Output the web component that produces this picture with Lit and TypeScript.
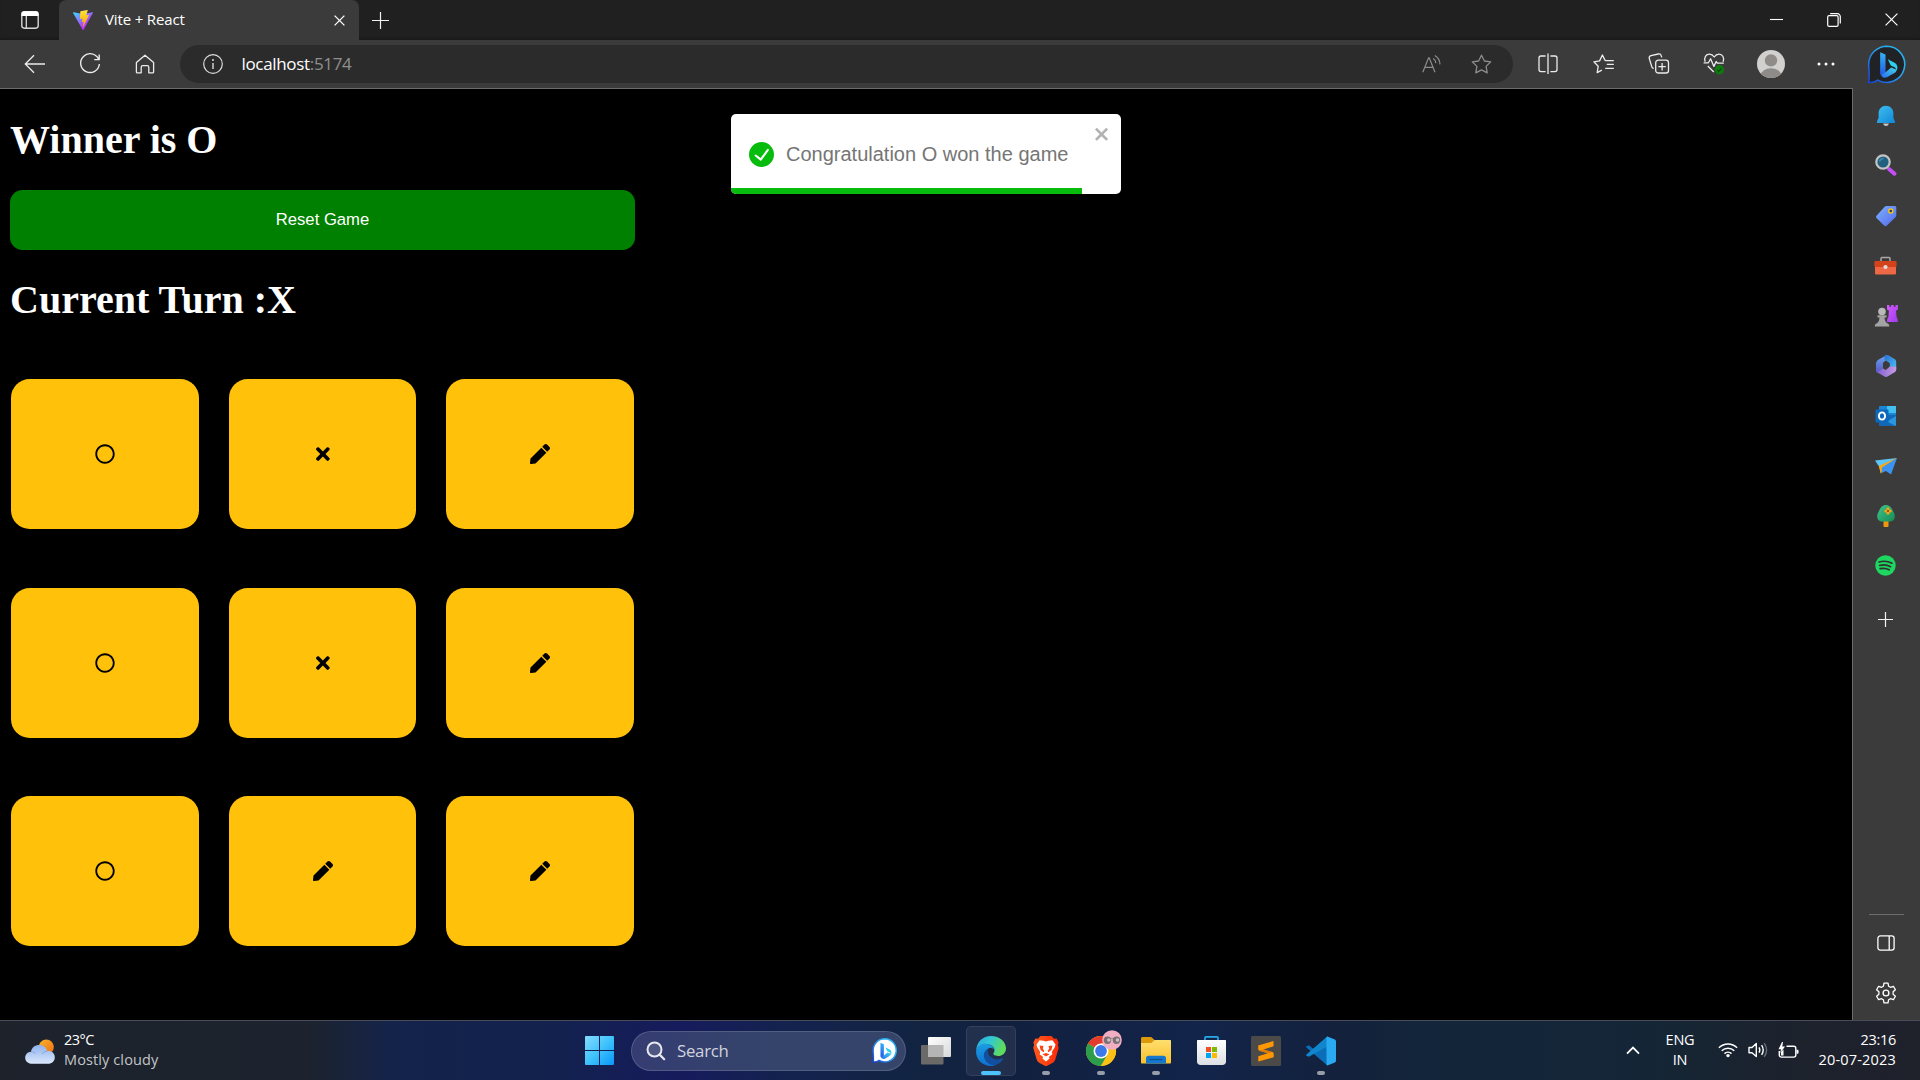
import { LitElement, html, css, svg, TemplateResult } from "lit";
import { customElement, state } from "lit/decorators.js";
import { classMap } from "lit/directives/class-map.js";

type Mark = "O" | "X" | "";

const PATHS: Record<string, { box: string; d: string }> = {
  O: {
    box: "0 0 512 512",
    d: "M256 8C119 8 8 119 8 256s111 248 248 248 248-111 248-248S393 8 256 8zm0 448c-110.5 0-200-89.5-200-200S145.5 56 256 56s200 89.5 200 200-89.5 200-200 200z",
  },
  X: {
    box: "0 0 352 512",
    d: "M242.72 256l100.07-100.07c12.28-12.28 12.28-32.19 0-44.48l-22.24-22.24c-12.28-12.28-32.19-12.28-44.48 0L176 189.28 75.93 89.21c-12.28-12.28-32.19-12.28-44.48 0L9.21 111.45c-12.28 12.28-12.28 32.19 0 44.48L109.28 256 9.21 356.07c-12.28 12.28-12.28 32.19 0 44.48l22.24 22.24c12.28 12.28 32.2 12.28 44.48 0L176 322.72l100.07 100.07c12.28 12.28 32.2 12.28 44.48 0l22.24-22.24c12.28-12.28 12.28-32.19 0-44.48L242.72 256z",
  },
  pen: {
    box: "0 0 512 512",
    d: "M290.74 93.24l128.02 128.02-277.99 277.99-114.14 12.6C11.35 513.54-1.56 500.62.14 485.34l12.7-114.22 277.9-277.88zm207.2-19.06l-60.11-60.11c-18.75-18.75-49.16-18.75-67.91 0l-56.55 56.55 128.02 128.02 56.55-56.55c18.75-18.76 18.75-49.16 0-67.91z",
  },
};

const icon = (w: number, h: number, body: TemplateResult | unknown) =>
  html`<svg width=${w} height=${h} viewBox="0 0 ${w} ${h}" fill="none">${body}</svg>`;

/* ---------- browser chrome ---------- */
const workspaces = icon(20, 20, svg`
  <rect x="1.8" y="1.8" width="16.4" height="16.4" rx="2.6" stroke="#d8d8d8" stroke-width="1.4"/>
  <path d="M1.5 6V4.2A3 3 0 0 1 4.4 1.3h11.2a3 3 0 0 1 2.9 2.9V6z" fill="#fff"/>
  <path d="M6.3 6v12" stroke="#d8d8d8" stroke-width="1.3"/>`);

const vite = html`<svg width="20" height="20" viewBox="0 0 256 257">
  <defs>
    <linearGradient id="va" x1="-.8%" x2="57.6%" y1="7.7%" y2="78.4%"><stop offset="0%" stop-color="#41D1FF"/><stop offset="100%" stop-color="#BD34FE"/></linearGradient>
    <linearGradient id="vb" x1="43.4%" x2="50.3%" y1="2.2%" y2="89%"><stop offset="0%" stop-color="#FFEA83"/><stop offset="8%" stop-color="#FFDD35"/><stop offset="100%" stop-color="#FFA800"/></linearGradient>
  </defs>
  <path fill="url(#va)" d="M255.153 37.938 134.897 252.976c-2.483 4.44-8.862 4.466-11.382.048L.875 37.958c-2.746-4.814 1.371-10.646 6.827-9.67l120.385 21.517a6.537 6.537 0 0 0 2.322-.004l117.867-21.483c5.438-.991 9.574 4.796 6.877 9.62Z"/>
  <path fill="url(#vb)" d="M185.432.063 96.44 17.501a3.268 3.268 0 0 0-2.634 3.014l-5.474 92.456a3.268 3.268 0 0 0 3.997 3.378l24.777-5.718c2.318-.535 4.413 1.507 3.936 3.838l-7.361 36.047c-.495 2.426 1.782 4.5 4.151 3.78l15.304-4.649c2.372-.72 4.652 1.36 4.15 3.788l-11.698 56.621c-.732 3.542 3.979 5.473 5.943 2.437l1.313-2.028 72.516-144.72c1.215-2.423-.88-5.186-3.54-4.672l-25.505 4.922c-2.396.462-4.435-1.77-3.759-4.114l16.646-57.705c.677-2.35-1.37-4.583-3.769-4.113Z"/>
</svg>`;

const cross = (s: number, c = "#fff", w = 1.3) =>
  icon(s, s, svg`<path d="M.6 .6 L${s - 0.6} ${s - 0.6} M${s - 0.6} .6 L.6 ${s - 0.6}" stroke=${c} stroke-width=${w}/>`);
const plus = (s: number) =>
  icon(s, s, svg`<path d="M${s / 2} 0V${s}M0 ${s / 2}H${s}" stroke="#f2f2f2" stroke-width="1.2"/>`);

const minimize = icon(13, 13, svg`<path d="M0 6.5h13" stroke="#fff" stroke-width="1.1"/>`);
const restore = icon(14, 14, svg`<rect x=".7" y="2.7" width="10.4" height="10.6" rx="1.4" stroke="#fff" stroke-width="1.2"/><path d="M3.2.7h7.2a2.9 2.9 0 0 1 2.9 2.9v7" stroke="#fff" stroke-width="1.2"/>`);
const back = icon(22, 20, svg`<path d="M21 10H1.5M10 1.3 1.3 10l8.7 8.7" stroke="#ececec" stroke-width="1.3"/>`);
const reload = icon(22, 22, svg`<path d="M19.6 6.2A9.4 9.4 0 1 0 20.4 11M20.2 1.6v5h-5" stroke="#ececec" stroke-width="1.4"/>`);
const home = icon(20, 20, svg`<path d="M1.4 8.6 10 1.2l8.6 7.4v9.3a.9.9 0 0 1-.9.9h-3.9v-5.5c0-1-.7-1.6-1.6-1.6H7.8c-.9 0-1.6.6-1.6 1.6v5.5H2.3a.9.9 0 0 1-.9-.9z" stroke="#ececec" stroke-width="1.3" stroke-linejoin="round"/>`);
const info = icon(20, 20, svg`<circle cx="10" cy="10" r="9.3" stroke="#dcdcdc" stroke-width="1.2"/><path d="M10 9v6" stroke="#dcdcdc" stroke-width="1.4"/><circle cx="10" cy="6" r="1" fill="#dcdcdc"/>`);
const readAloud = icon(20, 18, svg`<path d="M.8 17.3 6.6 2.8h.6L13 17.3M2.8 12.3h8.2" stroke="#8d8d8d" stroke-width="1.2"/><path d="M11.2 3.4c1.7 1 2.6 2.5 2.7 4.7M12.8.6c3.2 1.8 5 4.6 5.2 8.8" stroke="#8d8d8d" stroke-width="1.2"/>`);
const starPath = "M10.5 1.2l2.9 5.8 6.3.9-4.6 4.5 1.1 6.4-5.7-3-5.7 3 1.1-6.4L1.3 7.9l6.3-.9z";
const star = icon(21, 20, svg`<path d=${starPath} stroke="#8d8d8d" stroke-width="1.3" stroke-linejoin="round"/>`);
const split = icon(20, 22, svg`<path d="M7.6 3H3A2 2 0 0 0 1 5v11.6a2 2 0 0 0 2 2h4.6M12.4 3H17a2 2 0 0 1 2 2v11.6a2 2 0 0 1-2 2h-4.6M10 .5v20.6" stroke="#ececec" stroke-width="1.3"/>`);
const favorites = icon(22, 20, svg`<path d="M12.2 6.6 9.4 1 6.6 6.9l-5.7.9 4.3 4.4-1 6.4 4.6-2.4M12.2 6.6h8.6M13.8 10.4h7M12.2 14.4h8.6" stroke="#ececec" stroke-width="1.3" stroke-linejoin="round"/>`);
const collections = icon(22, 22, svg`<rect x="7.7" y="7.2" width="12.8" height="12.8" rx="2.6" stroke="#ececec" stroke-width="1.3"/><path d="M14.1 10v7.4M10.4 13.7h7.4M5.6 15.6A3 3 0 0 1 3.6 13L1.3 5.6A2.5 2.5 0 0 1 3 2.6L10.3 1a2.6 2.6 0 0 1 3 1.9l.5 1.5" stroke="#ececec" stroke-width="1.3"/>`);
const health = icon(24, 22, svg`<path d="M2.2 8.8C.6 4.4 3 1.2 6.5 1.2c2.300 0 3.700 1.300 4.700 2.800 1-1.500 2.500-2.800 4.800-2.800 3.500 0 5.700 3.500 4.100 7.600M.6 9.800h4.800l2.200-4 3.300 7.600 2.300-4.900 1.100 1.600h6.500M4.800 13l6 6" stroke="#ececec" stroke-width="1.3" stroke-linejoin="round"/><circle cx="16.400" cy="16.800" r="4.700" fill="#0f7b0f"/><path d="m14.300 17 1.500 1.400 2.800-3" stroke="#0a4d0a" stroke-width="1.200"/>`);
const avatar = html`<svg width="28" height="28" viewBox="0 0 28 28"><defs><clipPath id="av"><circle cx="14" cy="14" r="14"/></clipPath></defs><g clip-path="url(#av)"><rect width="28" height="28" fill="#d2d0ce"/><circle cx="14" cy="10.400" r="6.200" fill="#8f8b88"/><ellipse cx="14" cy="26" rx="10.500" ry="7.800" fill="#8f8b88"/></g></svg>`;
const dots = icon(18, 4, svg`<circle cx="2" cy="2" r="1.500" fill="#fff"/><circle cx="9" cy="2" r="1.500" fill="#fff"/><circle cx="16" cy="2" r="1.500" fill="#fff"/>`);

const bing = (size: number, light: boolean) => html`<svg width=${size} height=${size} viewBox="0 0 40 40">
  <defs>
    <linearGradient id="bo" x1="1" y1="0" x2="0" y2="1"><stop offset="0" stop-color=${light ? "#27c4f2" : "#22b5ef"}/><stop offset=".4" stop-color="#2aa8f0"/><stop offset="1" stop-color="#1742d4"/></linearGradient>
    <linearGradient id="bs" x1="0" y1="0" x2="0" y2="1"><stop offset="0" stop-color="#35b4f5"/><stop offset="1" stop-color="#2357e8"/></linearGradient>
    <linearGradient id="bt" x1="0" y1="1" x2="1" y2="0"><stop offset="0" stop-color="#2a6bf0"/><stop offset="1" stop-color="#3fd8e8"/></linearGradient>
  </defs>
  <path d="M20.500 1.200A18.600 18.600 0 1 1 11 36C8.400 38 5 38.800 1.600 38.400 3 34.500 1.900 28 1.700 20A18.800 18.800 0 0 1 20.500 1.200z" fill=${light ? "#fff" : "#202226"} stroke="url(#bo)" stroke-width=${light ? 2.4 : 1.6}/>
  <path d="M13.500 7.500 19 9.800v18.500l-2.600 3.200c-2 .5-2.900-1-2.900-3z" fill="url(#bs)"/>
  <path d="m21.300 14.600 7 3.600c3 1.800 3.600 4.800 2.200 8l-1.700-3.100-4.400-2.100z" fill="#2fd0ec"/>
  <path d="M14.600 30.900 19 28l5.800-4.900 5.700 2.200c-.6 2.200-1.600 3-3.700 4.300l-6.400 3.600c-2.600 1-4.700.2-5.800-2.300z" fill="url(#bt)"/>
</svg>`;

/* ---------- sidebar ---------- */
const side: TemplateResult[] = [
  html`<svg width="22" height="22" viewBox="0 0 22 22"><defs><linearGradient id="s1" x1="0" y1="0" x2="1" y2="1"><stop stop-color="#3fc0f0"/><stop offset="1" stop-color="#0f87d8"/></linearGradient></defs><path d="M8.200 18.500h5.600c-.4 1.800-1.500 2.500-2.800 2.500s-2.400-.7-2.800-2.500z" fill="#c8c8c8"/><path d="M11 .8c4.300 0 7.400 3.200 7.400 7.400v4.600l1.600 3.600c.4.900 0 1.600-1 1.600H3c-1 0-1.400-.7-1-1.600l1.600-3.600V8.200C3.600 4 6.700.8 11 .8z" fill="url(#s1)"/></svg>`,
  html`<svg width="22" height="26" viewBox="0 0 22 26"><path d="m14 16 5.500 4.700" stroke="#c44df5" stroke-width="4" stroke-linecap="round"/><circle cx="8" cy="9" r="6.700" fill="#23607f" stroke="#c4c4c4" stroke-width="2.200"/><path d="M4.500 8.500a4 4 0 0 1 4-3" stroke="#3d8cab" stroke-width="1.600" fill="none"/></svg>`,
  html`<svg width="22" height="22" viewBox="0 0 22 22"><defs><linearGradient id="s3" x1="0" y1="0" x2="1" y2="1"><stop stop-color="#7cb2ff"/><stop offset="1" stop-color="#5468e8"/></linearGradient></defs><path d="M11.500 1h8.200c.9 0 1.600.7 1.600 1.600v7.600c0 .8-.3 1.400-.8 2L11.900 20.600c-.8.8-2 .8-2.800 0l-7.400-7.400c-.8-.8-.8-2 0-2.800L9.700 1.800c.5-.5 1.100-.8 1.800-.8z" fill="url(#s3)"/><circle cx="15.800" cy="6" r="2" fill="#26375c" stroke="#f4c315" stroke-width="1.500"/></svg>`,
  html`<svg width="23" height="20" viewBox="0 0 23 20"><path d="M7 5V2.600C7 2 7.500 1.600 8 1.600h7c.6 0 1 .4 1 1V5" fill="none" stroke="#a9a9a9" stroke-width="1.500"/><rect x="1" y="9" width="21" height="9.500" rx="1.200" fill="#ee6846"/><rect x=".4" y="5" width="22.200" height="6" rx="1" fill="#d2431c"/><circle cx="11.500" cy="11" r="2.100" fill="#dedede"/></svg>`,
  html`<svg width="24" height="24" viewBox="0 0 24 24"><defs><linearGradient id="s5" x1="0" y1="0" x2="1" y2="1"><stop stop-color="#d45cff"/><stop offset="1" stop-color="#9d3be8"/></linearGradient></defs><path d="M13 1h2.300v1.800h1.800V1h2.600v1.800h1.800V1H24v4.500l-2 1.300.6 6.200 1.200 2.400V18H13l.2-2.400 1.200-2.600.5-6.200-1.900-1.300z" fill="url(#s5)"/><circle cx="8" cy="7.500" r="3.800" fill="#b8b8b8"/><path d="M3.500 11.200h9v2.200h-2c.2 2.500.7 4 2.600 5.800 1.700.6 2.200 1.500 2.200 3.300H.8c0-1.800.5-2.700 2.200-3.300 1.900-1.800 2.300-3.300 2.500-5.800h-2z" fill="#a3a3a3"/></svg>`,
  html`<svg width="22" height="24" viewBox="0 0 22 24"><defs><linearGradient id="s6" x1="0" y1="0" x2="0" y2="1"><stop stop-color="#6aa9f0"/><stop offset="1" stop-color="#5a55c4"/></linearGradient><linearGradient id="s7" x1="0" y1="0" x2="1" y2="0"><stop stop-color="#7f62cc"/><stop offset="1" stop-color="#c79be6"/></linearGradient><linearGradient id="s8" x1="0" y1="0" x2="1" y2="1"><stop stop-color="#2a6fd0"/><stop offset="1" stop-color="#4fc0f4"/></linearGradient></defs><path d="M12 1 3.700 5.500C2 6.500 1 8 1 10v7c0 1.300 1.400 2 2.500 1.400L8 15.700V9.800c0-1.200.5-1.800 1.400-2.400l5-3.300z" fill="url(#s6)"/><path d="M9.500 1.500c1.500-.8 3-.7 4.400.1L19.500 5c1.200.8 1.700 1.700 1.700 3v8l-6.400-3.400V9.200L9.300 5.500z" fill="url(#s8)"/><path d="M2 18.300 9 22.300c1.300.8 2.700.8 4 0l6.200-3.700c1.300-.8 2-1.800 2-3.300v-2.500l-6.400-.2-4 3.400L8 14.500z" fill="url(#s7)"/></svg>`,
  html`<svg width="22" height="22" viewBox="0 0 22 22"><rect x="4" y="1" width="17" height="14" rx="1" fill="#1a86d4"/><path d="M12 1h9v7h-9z" fill="#42c0f2"/><path d="M4 10h17v10c0 .6-.4 1-1 1H5c-.6 0-1-.4-1-1z" fill="#1467b4"/><path d="m21 11-9 5.500L20.500 21c.3-.2.500-.6.500-1z" fill="#2896e0"/><rect x=".5" y="4.500" width="13" height="13" rx="1" fill="#0b68bd"/><ellipse cx="7" cy="11" rx="3.100" ry="3.600" fill="none" stroke="#fff" stroke-width="1.900"/></svg>`,
  html`<svg width="22" height="18" viewBox="0 0 22 18"><path d="M0 3.500 22 1 4 9.500z" fill="#5cc6f8"/><path d="M4 9 22 1 8 11l-2 6z" fill="#f5b21b"/><path d="M4 9 22 1 5.500 16z" fill="#f5a81b"/><path d="m7 10.500 15-9.500-6 16.500-5-3.600-4.500 2z" fill="#3c92ee"/></svg>`,
  html`<svg width="20" height="24" viewBox="0 0 20 24"><defs><linearGradient id="s9" x1="0" y1="0" x2="1" y2="1"><stop stop-color="#3fc58c"/><stop offset="1" stop-color="#168a55"/></linearGradient></defs><path d="M7.500 16h5v6c0 .6-.4 1-1 1h-3c-.6 0-1-.4-1-1z" fill="#f0960f"/><path d="M10 1c3.500 0 5.500 2.500 6.500 5 1.500 2.500 2.300 4.500 2.300 6.600 0 3-2.200 5-5.300 5h-7c-3.100 0-5.300-2-5.300-5 0-2.100.8-4.100 2.300-6.600C4.500 3.500 6.500 1 10 1z" fill="url(#s9)"/><g fill="#f5a50f"><circle cx="12" cy="4.900" r="1.600"/><circle cx="12" cy="9.100" r="1.600"/><circle cx="9.900" cy="7" r="1.600"/><circle cx="14.100" cy="7" r="1.600"/></g><circle cx="12" cy="7" r="1.100" fill="#a33d08"/></svg>`,
  html`<svg width="21" height="21" viewBox="0 0 21 21"><circle cx="10.500" cy="10.500" r="10.200" fill="#1ed760"/><path d="M4 7c4.500-1.300 9-.9 13 1.200M4.600 10.500c4-1.100 7.500-.7 11 1.200M5.200 13.700c3.300-.8 6.200-.5 9 1.100" stroke="#303030" stroke-width="1.700" stroke-linecap="round" fill="none"/></svg>`,
];
const panelIcon = icon(18, 16, svg`<rect x=".9" y=".9" width="16.200" height="14.200" rx="2.400" stroke="#fff" stroke-width="1.300"/><path d="M12.200 1v14" stroke="#fff" stroke-width="1.300"/>`);
const gear = icon(22, 22, svg`<path d="M9 1.200h4l.6 3 1.900 1.100 2.900-1 2 3.500-2.300 2v2.400l2.300 2-2 3.500-2.900-1-1.900 1.100-.6 3H9l-.6-3-1.900-1.100-2.900 1-2-3.500 2.300-2V9.800l-2.300-2 2-3.500 2.900 1 1.900-1.100z" stroke="#fff" stroke-width="1.300" stroke-linejoin="round"/><circle cx="11" cy="11" r="2.900" stroke="#fff" stroke-width="1.400"/>`);

/* ---------- taskbar ---------- */
const weather = html`<svg width="30" height="26" viewBox="0 0 30 26"><defs><linearGradient id="w1" x1="0" y1="0" x2="1" y2="1"><stop stop-color="#f8b62d"/><stop offset="1" stop-color="#ef6a12"/></linearGradient><linearGradient id="w2" x1="0" y1="0" x2="0" y2="1"><stop stop-color="#8fb2ee"/><stop offset="1" stop-color="#dbe8fb"/></linearGradient></defs><circle cx="21.300" cy="8" r="7.600" fill="url(#w1)"/><path d="M6 12.800C6.600 8.500 10 6 14 6c4.300 0 7.400 2.600 8.200 6.200 4.500-.6 7.600 2.300 7.600 6 0 3.900-2.800 6.600-6.800 6.600H7c-4 0-6.800-2.400-6.800-6 0-3.400 2.500-5.900 5.800-6z" fill="url(#w2)"/><path d="M17 15c1.300-1.800 3-2.800 5.200-2.800M6 12.800c2 0 3.600.6 4.600 1.800" stroke="#83a4e4" stroke-width="1" fill="none"/></svg>`;
const winLogo = html`<svg width="29" height="29" viewBox="0 0 29 29"><defs><linearGradient id="wl" x1="0" y1="0" x2="29" y2="29" gradientUnits="userSpaceOnUse"><stop stop-color="#86dcff"/><stop offset=".5" stop-color="#3fc3fb"/><stop offset="1" stop-color="#0a95fa"/></linearGradient></defs><path fill="url(#wl)" d="M1 0h13v14H0V1a1 1 0 0 1 1-1zM15 0h13a1 1 0 0 1 1 1v13H15zM0 15h14v14H1a1 1 0 0 1-1-1zM15 15h14v13a1 1 0 0 1-1 1H15z"/></svg>`;
const magnifier = icon(20, 20, svg`<circle cx="8.500" cy="8.500" r="7" fill="#ffffff22" stroke="#e6e8ee" stroke-width="2"/><path d="m13.600 13.600 4.600 4.600" stroke="#e6e8ee" stroke-width="2.200" stroke-linecap="round"/>`);
const taskView = html`<svg width="30" height="28" viewBox="0 0 30 28"><defs><linearGradient id="tv" x1="0" y1="0" x2="1" y2="1"><stop stop-color="#fff"/><stop offset="1" stop-color="#d8d8d8"/></linearGradient></defs><rect x="0" y="8" width="22.500" height="19.600" rx="1" fill="#6c6a69"/><rect x="7" y="0" width="23" height="20" rx="1" fill="url(#tv)"/><path d="M7 8h15.500v12H8a1 1 0 0 1-1-1z" fill="#b5b5b5"/></svg>`;
const edge = html`<svg width="30" height="30" viewBox="0 0 30 30"><defs><linearGradient id="e1" x1="0" y1="0" x2="1" y2=".3"><stop stop-color="#2aa6e0"/><stop offset=".5" stop-color="#31c8d4"/><stop offset="1" stop-color="#5fdc5a"/></linearGradient><linearGradient id="e2" x1="0" y1="0" x2="0" y2="1"><stop stop-color="#1b9de2"/><stop offset="1" stop-color="#0f6fd0"/></linearGradient></defs><path d="M.2 14C.8 5.500 7.200 0 15 0c8.800 0 15 6 15 12.200 0 4.700-3.500 7.800-8 7.800-3.400 0-5.300-1.300-4.400-2.900 1.100-1.800 1.200-3.600.2-5.300C16 8.600 12 7.400 8 8.200 4.500 9 1.500 11 .2 14z" fill="url(#e1)"/><path d="M.1 14.500C1.500 9.800 5.500 7.400 10 7.700c4.500.3 7.600 2.800 8 6-1.300-2-4-2.600-6-1-3.500 3-2.500 9.300 1.500 13 1.900 1.700 3.500 2.700 5.300 3.800C9.500 32-.8 25 .1 14.500z" fill="url(#e2)"/><path d="M12 12.700c-2.900 1.300-4.500 4.200-4.200 7.300.4 4.500 4.500 9.300 11 9.500 3.600-1.200 6.400-3.300 8.300-6.400.4-.8-.2-1.200-1-.8C21 25 13 22.500 12 16.500c-.2-1.500 0-2.700 0-3.800z" fill="#12509f"/></svg>`;
const brave = html`<svg width="26" height="30" viewBox="0 0 26 30"><defs><linearGradient id="br"><stop stop-color="#ff5a1c"/><stop offset="1" stop-color="#fb2a08"/></linearGradient></defs><path d="M7.500 0h11L21 2.700l2.600-.3 2 4-.7 2.300.8 3.300-3.500 11.800c-.4 1.200-1 1.900-2 2.600L13.800 30h-1.600l-6.400-3.600c-1-.7-1.600-1.400-2-2.600L.3 12l.8-3.300-.7-2.300 2-4 2.600.3z" fill="url(#br)"/><path d="m13 5.500 2.500-.8 4-.5 3 4.300-.7 2.800-3 4.700.6 2.300-3.600 2.700.8 1.600L13 25.500l-3.600-2.900.8-1.600-3.600-2.700.6-2.300-3-4.700-.7-2.800 3-4.300 4 .5z" fill="#fff"/><path d="m6.500 9.600 4 .4-.7 2.600 1.500 2.500-.8 1.100-2.900-2.300zM19.500 9.600l-4 .4.7 2.600-1.500 2.500.8 1.100 2.900-2.300zM9.500 18.300l3.500-1.300 3.500 1.300L13 20.600z" fill="#fb4314"/></svg>`;
const chrome = html`<svg width="36" height="36" viewBox="0 0 36 36"><g transform="translate(0 6)"><circle cx="15" cy="15" r="15" fill="#fbc116"/><path d="M15 15 2 7.500A15 15 0 0 0 15 30l6.500-11.200z" fill="#2c9e4b"/><path d="M15 15 2 7.500A15 15 0 0 1 28 7.500H15z" fill="#e33b2e"/><path d="M28 7.500H15V15l6.500 3.700L15 30A15 15 0 0 0 28 7.500z" fill="#fbc116"/><circle cx="15" cy="15" r="7.500" fill="#fff"/><circle cx="15" cy="15" r="5.900" fill="#3b79ea"/></g><circle cx="26" cy="10" r="9.800" fill="#f0aec3"/><path d="M18 8.500h16" stroke="#a08a90" stroke-width="1.200"/><circle cx="21.500" cy="10.300" r="3.700" fill="#7b6f73"/><circle cx="30.500" cy="10.300" r="3.700" fill="#7b6f73"/><circle cx="22.800" cy="10" r="1.800" fill="#c9c1c4"/><circle cx="31.500" cy="10" r="1.800" fill="#c9c1c4"/></svg>`;
const explorer = html`<svg width="30" height="27" viewBox="0 0 30 27"><defs><linearGradient id="fx" x1="0" y1="0" x2="0" y2="1"><stop stop-color="#ffdf6e"/><stop offset="1" stop-color="#fbc02b"/></linearGradient></defs><path d="M0 1.500C0 .7.700 0 1.500 0h8c.8 0 1.400.3 1.900.9L13.500 3 11 7H0z" fill="#dc9a0b"/><path d="M0 6h9.500c1 0 1.500-.3 2-1l1-1.200c.4-.6.900-.8 1.600-.8H29c.6 0 1 .4 1 1v21.500c0 .6-.4 1-1 1H1c-.6 0-1-.4-1-1z" fill="url(#fx)"/><path d="M5 26.500V21c0-1.300 1-2.300 2.300-2.300h15.400c1.300 0 2.300 1 2.300 2.300v5.500z" fill="#1578cc"/><path d="M8.500 22.500h13" stroke="#0c4f92" stroke-width="1.300"/></svg>`;
const store = html`<svg width="29" height="29" viewBox="0 0 29 29"><defs><linearGradient id="st" x1="0" y1="0" x2="0" y2="1"><stop stop-color="#fff"/><stop offset="1" stop-color="#dcdfe3"/></linearGradient></defs><path d="M8 6V1.600C8 1 8.400.8 9 .8h11c.6 0 1 .2 1 .8V6" fill="none" stroke="#27a9ea" stroke-width="1.700"/><path d="M0 5c0-.6.400-1 1-1h27c.6 0 1 .4 1 1v20.500c0 2-1.500 3.500-3.500 3.500h-22C1.500 29 0 27.500 0 25.500z" fill="url(#st)"/><path d="M9 11h5v5H9z" fill="#f25022"/><path d="M15 11h5v5h-5z" fill="#7fba00"/><path d="M9 17h5v5H9z" fill="#00a4ef"/><path d="M15 17h5v5h-5z" fill="#ffb900"/></svg>`;
const sublime = html`<svg width="30" height="30" viewBox="0 0 30 30"><rect width="30" height="30" rx="1.500" fill="#4b4a49"/><path d="M22.500 5v5.300L12.500 13.400l8.700 2.700c1 .3 1.500 1 1.500 2V21.300L7.300 25.500V20.300l9.500-3L8.400 14.700c-.8-.3-1.200-.8-1.200-1.600V9.500z" fill="#ff9800"/><path d="m12.500 13.400 8.700 2.700-4.400 1.200-8.400-2.600z" fill="#d97b05"/></svg>`;
const vscode = html`<svg width="30" height="30" viewBox="0 0 30 30"><path d="M21.300.4 7.500 13 2.800 9.300.5 10.300c-.5.3-.5.900-.1 1.300L21.300 29.600 24 21z" fill="#0a6fb8"/><path d="M.4 18.400 21.300.4 24 9 2.800 20.700.5 19.700c-.5-.3-.5-.9-.1-1.300z" fill="#1186cc"/><path d="m21.300.4 7.600 3.200c.7.300 1.100.9 1.100 1.600v19.600c0 .7-.4 1.300-1.100 1.600l-7.600 3.200c-.5-.4-.8-1-.8-1.700V2.100c0-.7.300-1.300.8-1.700z" fill="#2aaaf2"/></svg>`;
const chevron = icon(14, 9, svg`<path d="m1 7.600 6-6 6 6" stroke="#fff" stroke-width="1.800"/>`);
const wifi = icon(20, 16, svg`<path d="M.9 5.800a13 13 0 0 1 18.200 0M3.700 8.800a9 9 0 0 1 12.600 0M6.500 11.600a5 5 0 0 1 7 0" stroke="#fff" stroke-width="1.500"/><circle cx="10" cy="13.600" r="1.700" fill="#fff"/>`);
const speaker = icon(20, 16, svg`<path d="M1 5.500h3L8.300 1.500v13L4 10.700H1z" stroke="#fff" stroke-width="1.400" stroke-linejoin="round"/><path d="M11 5.400c1 1.600 1 3.700 0 5.300M13.600 3.200c2 3 2 6.700 0 9.700" stroke="#fff" stroke-width="1.400"/><path d="M16.200 1.200c3 4.200 3 9.400 0 13.700" stroke="#65707b" stroke-width="1.400"/>`);
const battery = icon(21, 17, svg`<path d="M8.500 4.300h7.300a2 2 0 0 1 2 2v6.800a2 2 0 0 1-2 2H3.300a2 2 0 0 1-2-2V9" stroke="#fff" stroke-width="1.400"/><path d="M18.500 7.700h1c.6 0 1 .4 1 1v2c0 .6-.4 1-1 1h-1z" fill="#fff"/><path d="M4 0 .5 7.300H3L2.300 11 7 4.500H4.300L5 0z" fill="#fff"/><path d="M3 13.500V10l2.500-2.500v6z" fill="#fff"/>`);

@customElement("app-root")
export class AppRoot extends LitElement {
  static styles = css`
    :host { display: block; width: 1920px; height: 1080px; overflow: hidden; background: #000; color: #fff; }
    * { box-sizing: border-box; }
    svg { display: block; flex: none; overflow: visible; }
    .desktop { display: grid; grid-template-rows: 40px 48px 932px 60px; height: 1080px; font-family: "Open Sans", "Noto Sans", sans-serif; }
    .center { display: flex; align-items: center; justify-content: center; }

    .tabs { background: #202020; display: flex; align-items: stretch; box-shadow: inset 0 -3px 3px -2px #181818; }
    .tabs .work { width: 59px; }
    .tab { width: 300px; background: #3b3b3b; border-radius: 7px 7px 0 0; display: flex; align-items: center; padding: 0 14px; }
    .tab .name { flex: 1; margin-left: 12px; font-size: 15px; letter-spacing: -0.150px; line-height: 20px; padding-bottom: 3px; }
    .newtab { width: 43px; }
    .drag { flex: 1; }
    .wc { width: 57.500px; }
    .wcs { display: flex; padding-bottom: 1px; }

    .bar { background: #3b3b3b; display: flex; align-items: center; }
    .bar .nav { width: 55px; height: 48px; }
    .first { margin-left: 7px; }
    .pill { width: 1333px; height: 38px; border-radius: 19px; background: #2b2b2b; display: flex; align-items: center; margin-left: 8px; padding: 0 21px 0 22.500px; }
    .url { flex: 1; margin-left: 19px; font-size: 17px; letter-spacing: -0.330px; line-height: 24px; padding-bottom: 1px; }
    .port { color: #8f8f8f; }
    .pill .aloud { margin-right: 29px; }
    .tools { display: flex; align-items: center; margin-left: 7px; }
    .tools .t { width: 55.700px; height: 48px; }
    .bingtop { margin-left: 11px; width: 42px; }

    .main { display: grid; grid-template-columns: 1852px 68px; }
    .page { border-top: 1px solid #6c6c6c; background: #000; padding: 28px 10px 0; position: relative; }
    h1 { margin: 0; font: bold 40px/46px "Liberation Serif", "Times New Roman", serif; }
    .reset { display: block; width: 625px; height: 60px; margin: 27px 0 27px; border: 0; border-radius: 12.500px; background: #008000; color: #fff; font: 16.670px "Liberation Sans", Arial, sans-serif; padding: 0; }
    .board { display: grid; grid-template-columns: repeat(3, 187.500px); grid-auto-rows: 150px; gap: 58.700px 30.100px; margin: 56px 0 0 1.250px; }
    .cell { background: #ffc10a; border-radius: 18.750px; }
    .cell svg { height: 20px; fill: #000; }
    .toast { position: absolute; left: 731px; top: 25px; width: 390px; height: 80px; border-radius: 5px; overflow: hidden; background: #fff; color: #757575; display: flex; align-items: center; padding: 0 12px 0 18px; font: 20px "Liberation Sans", Arial, sans-serif; }
    .toast .msg { flex: 1; margin-left: 12px; white-space: nowrap; }
    .toast .x { align-self: flex-start; margin-top: 10px; }
    .progress { position: absolute; left: 0; bottom: 0; height: 6px; background: #07bc0c; }

    .side { background: #3b3b3b; border-left: 1px solid #6c6c6c; display: flex; flex-direction: column; align-items: center; padding: 2.500px 1.500px 0 0; }
    .side .s { height: 50px; width: 66px; flex: none; }
    .side .add { margin-top: 3.500px; }
    .side .fill { flex: 1; }
    .side hr { width: 35px; height: 1px; border: 0; background: #6c6c6c; margin: 0 0 3px 1px; }
    .side .last { margin-bottom: 2px; }

    .task { border-top: 1px solid #484d59; display: grid; grid-template-columns: 572px 1fr auto; font-size: 14.500px; line-height: 20px; background: linear-gradient(90deg, #1d222b 0, #1c232e 310px, #14234a 390px, #13214e 560px, #161b5c 680px, #14224f 780px, #122443 900px, #12203f 1010px, #12244a 1200px, #13213c 1340px, #13253a 1420px, #142636 1650px, #1c222d 1780px, #1f212b 1920px); }
    .weather { display: flex; align-items: center; padding-left: 25px; gap: 9px; }
    .weather .sub { color: #c3c6ca; letter-spacing: 0.110px; }
    .temp { letter-spacing: -0.500px; }
    .weather svg { margin-top: 3px; }
    .weather .txt { margin-top: -2px; }
    .apps { display: flex; align-items: center; }
    .start { width: 55px; }
    .search { width: 275px; height: 40px; border-radius: 20px; border: 1px solid #ffffff26; background: linear-gradient(90deg, #353c72, #34446a 50%, #36446a); display: flex; align-items: center; padding: 0 8px 0 14px; margin: 0 4px; color: #d0d3de; }
    .search .q { flex: 1; margin-left: 11px; font-size: 16.800px; letter-spacing: -0.250px; line-height: 24px; }
    .tview { width: 52px; }
    .app { width: 50px; height: 50px; border-radius: 5px; margin-left: 5px; position: relative; border: 1px solid transparent; }
    .app.active { background: #ffffff12; border-color: #ffffff14; }
    .app.first-app { margin-left: 4px; }
    .app .badge-shift { padding: 0 0 6px 6px; }
    .app i { position: absolute; left: 20px; bottom: 0; width: 8px; height: 4px; border-radius: 2px; background: #979eaa; }
    .app.active i { left: 14px; width: 20px; background: #4cc2ff; }
    .tray { display: flex; align-items: center; padding-right: 24px; }
    .tray .lang { text-align: center; margin: -2px 22px 0 24px; width: 32px; letter-spacing: -0.200px; }
    .tray .status { display: flex; align-items: center; gap: 10px; margin-top: -1px; }
    .tray .clock { text-align: right; margin: -2px 0 0 17px; width: 80px; letter-spacing: -0.300px; white-space: nowrap; }
    .tray .date { letter-spacing: 0.180px; }
  `;

  @state() private cells: Mark[] = ["O", "X", "", "O", "X", "", "O", "", ""];
  @state() private turn: Mark = "X";
  @state() private winner: Mark = "O";
  private progress = 90;

  private renderCell(mark: Mark) {
    const shape = PATHS[mark || "pen"];
    return html`<div class="cell center"><svg viewBox=${shape.box}><path d=${shape.d} /></svg></div>`;
  }

  private renderApp(art: TemplateResult, running: boolean, active = false, badge = false) {
    return html`<div class=${classMap({ app: true, center: true, active, "first-app": active })}>
      <div class=${classMap({ "badge-shift": badge })}>${art}</div>${running ? html`<i></i>` : ""}
    </div>`;
  }

  render() {
    return html`<div class="desktop">
      <header class="tabs">
        <div class="work center">${workspaces}</div>
        <div class="tab">${vite}<span class="name">Vite + React</span>${cross(11)}</div>
        <div class="newtab center">${plus(17)}</div>
        <div class="drag"></div>
        <div class="wcs">
          <div class="wc center">${minimize}</div><div class="wc center">${restore}</div><div class="wc center">${cross(13, "#fff", 1.2)}</div>
        </div>
      </header>
      <nav class="bar">
        <div class="nav first center">${back}</div><div class="nav center">${reload}</div><div class="nav center">${home}</div>
        <div class="pill">
          ${info}<span class="url">localhost<span class="port">:5174</span></span>
          <span class="aloud">${readAloud}</span>${star}
        </div>
        <div class="tools">
          ${[split, favorites, collections, health, avatar, dots].map((t) => html`<div class="t center">${t}</div>`)}
        </div>
        <div class="bingtop center">${bing(39, false)}</div>
      </nav>
      <div class="main">
        <main class="page">
          <h1>Winner is ${this.winner}</h1>
          <button class="reset">Reset Game</button>
          <h1>Current Turn :${this.turn}</h1>
          <section class="board">${this.cells.map((c) => this.renderCell(c))}</section>
          <div class="toast">
            <svg width="25" height="25" viewBox="0 0 24 24" fill="#07bc0c"><path d="M12 0a12 12 0 1012 12A12.014 12.014 0 0012 0zm6.927 8.2l-6.845 9.289a1.011 1.011 0 01-1.43.188l-4.888-3.908a1 1 0 111.25-1.562l4.076 3.261 6.227-8.451a1 1 0 111.61 1.183z"/></svg>
            <span class="msg">Congratulation ${this.winner} won the game</span>
            <svg class="x" width="14" height="20" viewBox="1 0 11.200 16" fill="#b2b2b2"><path fill-rule="evenodd" d="M7.710 8.230l3.750 3.750-1.480 1.480-3.750-3.750-3.750 3.750L1 11.980l3.750-3.750L1 4.480 2.480 3l3.750 3.750L9.980 3l1.480 1.480-3.750 3.750z"/></svg>
            <div class="progress" style="width:${this.progress}%"></div>
          </div>
        </main>
        <aside class="side">
          ${side.map((s) => html`<div class="s center">${s}</div>`)}
          <div class="s add center">${plus(15)}</div>
          <div class="fill"></div>
          <hr />
          <div class="s center">${panelIcon}</div>
          <div class="s last center">${gear}</div>
        </aside>
      </div>
      <footer class="task">
        <div class="weather">${weather}<div class="txt"><div class="temp">23°C</div><div class="sub">Mostly cloudy</div></div></div>
        <div class="apps">
          <div class="start center">${winLogo}</div>
          <div class="search">${magnifier}<span class="q">Search</span>${bing(25, true)}</div>
          <div class="tview center">${taskView}</div>
          ${this.renderApp(edge, true, true)}${this.renderApp(brave, true)}${this.renderApp(chrome, true, false, true)}
          ${this.renderApp(explorer, true)}${this.renderApp(store, false)}${this.renderApp(sublime, false)}${this.renderApp(vscode, true)}
        </div>
        <div class="tray">
          ${chevron}
          <div class="lang">ENG<br />IN</div>
          <div class="status">${wifi}${speaker}${battery}</div>
          <div class="clock"><div>23:16</div><div class="date">20-07-2023</div></div>
        </div>
      </footer>
    </div>`;
  }
}
